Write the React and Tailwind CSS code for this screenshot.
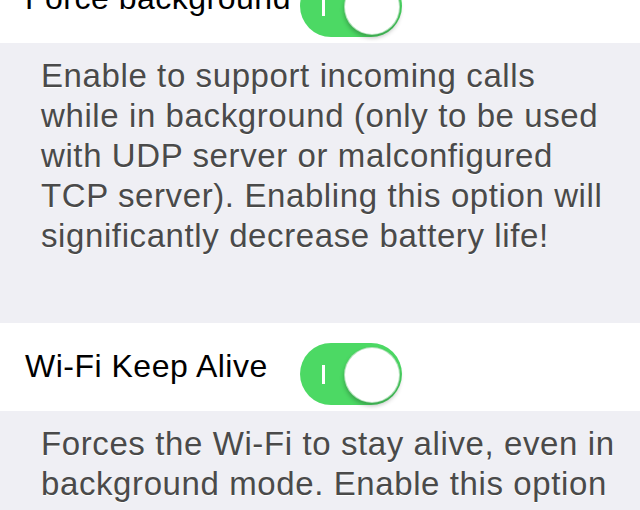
const Toggle = () => (
  <div className="relative mt-[20px] h-[62px] w-[102px] shrink-0 rounded-full bg-[#4cd964]">
    <div className="absolute left-[22px] top-[22px] h-[19px] w-[3px] bg-white" />
    <div className="absolute right-[2px] top-[4px] h-[56px] w-[56px] rounded-full border border-[#3fb653]/40 bg-white shadow-[0_3px_4px_rgba(0,0,0,0.25)]" />
  </div>
);

const Row = ({ label, className = "" }) => (
  <div className={"flex h-[88px] items-start bg-white " + className}>
    <span className="mt-[27px] w-[300px] pl-[25px] text-[32px] leading-none tracking-[0.5px] text-black">
      {label}
    </span>
    <Toggle />
  </div>
);

const Footer = ({ lines, className = "" }) => (
  <div className={"bg-[#efeff4] pl-[41px] pt-[13px] text-[33px] leading-[40px] tracking-[0.6px] text-[#4a4a4a] [text-shadow:0_1px_0_#fff] " + className}>
    {lines.map((l) => (
      <div key={l} className="whitespace-nowrap">{l}</div>
    ))}
  </div>
);

export default function App() {
  return (
    <div className="h-[510px] w-[640px] overflow-hidden bg-[#efeff4] font-['Liberation_Sans',Arial,sans-serif]">
      <Row label="Force background" className="-mt-[45px]" />
      <Footer
        className="h-[280px]"
        lines={[
          "Enable to support incoming calls",
          "while in background (only to be used",
          "with UDP server or malconfigured",
          "TCP server). Enabling this option will",
          "significantly decrease battery life!",
        ]}
      />
      <Row label="Wi-Fi Keep Alive" />
      <Footer
        lines={[
          "Forces the Wi-Fi to stay alive, even in",
          "background mode. Enable this option",
        ]}
      />
    </div>
  );
}
